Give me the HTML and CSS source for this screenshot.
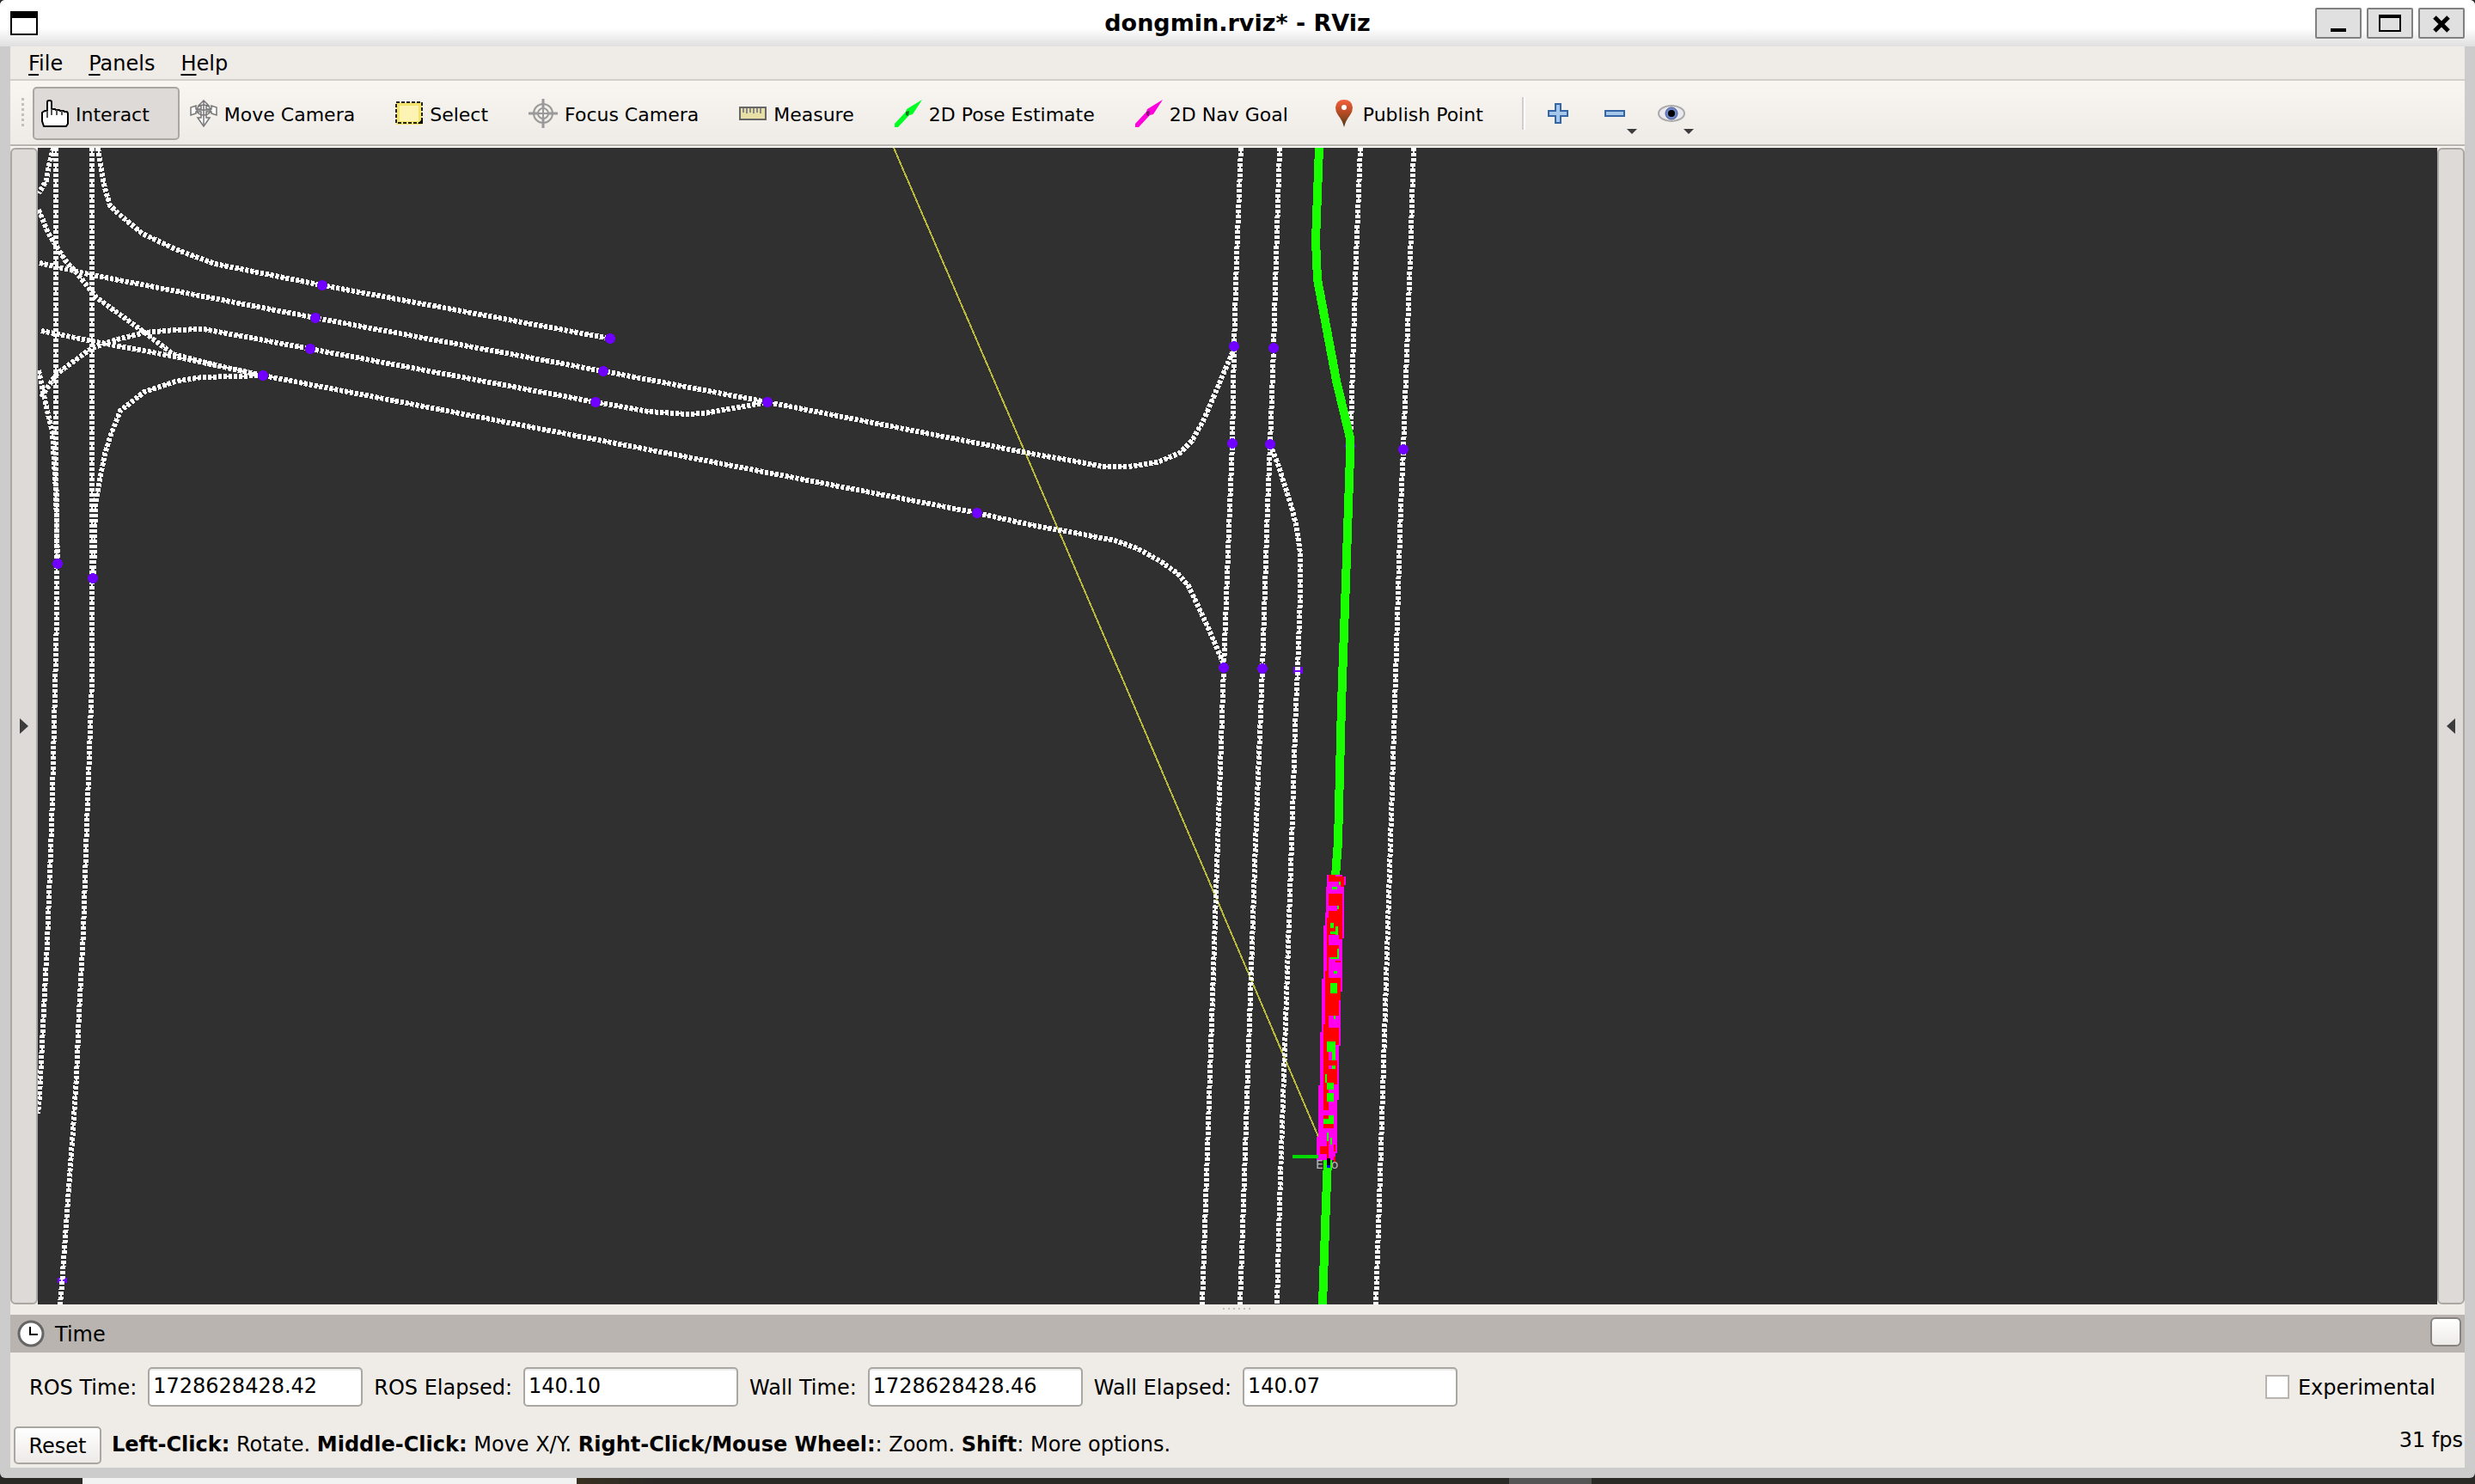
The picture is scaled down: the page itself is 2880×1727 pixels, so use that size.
FILE: index.html
```html
<!DOCTYPE html>
<html lang="en">
<head>
<meta charset="utf-8">
<title>dongmin.rviz* - RViz</title>
<link rel="stylesheet" href="styles.css">
</head>
<body>
<div class="window">
  <header class="titlebar">
    <svg class="app-icon" width="32" height="28" viewBox="0 0 32 28" aria-hidden="true"><path fill="#fff" stroke="#000" stroke-width="2" d="M1 1h30v26H1z"/><path d="M0 0h32v8H0z"/></svg>
    <h1 class="title">dongmin.rviz* - RViz</h1>
    <div class="window-buttons">
      <button class="win-btn" aria-label="Minimize"><svg width="50" height="32" viewBox="0 0 50 32"><path d="M16 22h18v4H16z"/></svg></button>
      <button class="win-btn" aria-label="Maximize"><svg width="50" height="32" viewBox="0 0 50 32"><path fill="none" stroke="#000" stroke-width="2" d="M13 7h24v18H13z"/><path d="M12 6h26v4H12z"/></svg></button>
      <button class="win-btn" aria-label="Close"><svg width="50" height="32" viewBox="0 0 50 32"><path fill="none" stroke="#000" stroke-width="5" d="M17 9l16 16M33 9L17 25"/></svg></button>
    </div>
  </header>

  <div class="frame">
    <nav class="menubar">
      <button class="menu"><span class="key">F</span>ile</button>
      <button class="menu"><span class="key">P</span>anels</button>
      <button class="menu"><span class="key">H</span>elp</button>
    </nav>

    <div class="toolbar" role="toolbar" aria-label="Tools">
      <span class="grip"></span>
      <button class="tool active">
        <svg width="32" height="32" viewBox="0 0 32 32"><path fill="#fff" stroke="#000" stroke-width="2" stroke-linejoin="round" d="M3 31L1 25V15l3-2h3V3q0-2 2-2h1q2 0 2 2v8h4l1 1h4l1 1h4l1 1h3l1 2v12l-2 3z"/><path fill="none" stroke="#555" stroke-width="2" d="M7 13v8M12 11v7M18 12v6M24 13v5"/></svg>
        Interact</button>
      <button class="tool">
        <svg width="32" height="32" viewBox="0 0 32 32" fill="#fff" stroke="#777" stroke-width="1.5"><path d="M16 1l6 6h-3v4l6 0V7l6 2v9l-6-2v-2h-6v7h4l-7 10-7-10h4v-7H7v2l-6 2V9l6-2v4l6 0V7h-3z"/><ellipse cx="16" cy="12" rx="8" ry="6" fill="none"/><path fill="none" d="M8 12h16M16 3v26"/></svg>
        Move Camera</button>
      <button class="tool">
        <svg width="32" height="32" viewBox="0 0 32 32"><path fill="#fdf4b4" stroke="#f3e36a" stroke-width="4" d="M3 5h26v22H3z"/><path fill="none" stroke="#222" stroke-width="2" stroke-dasharray="4 2" d="M1 3h30v24H1z"/><path d="M32 22v6h-6z"/></svg>
        Select</button>
      <button class="tool">
        <svg width="34" height="34" viewBox="0 0 34 34" fill="none" stroke="#999" stroke-width="2"><circle cx="17" cy="17" r="11"/><circle cx="17" cy="17" r="6"/><path stroke-width="3" d="M17 0v12M17 22v12M0 17h12M22 17h12"/><path d="M17 12v10M12 17h10"/></svg>
        Focus Camera</button>
      <button class="tool">
        <svg width="32" height="32" viewBox="0 0 32 32"><path fill="#e8dfa6" stroke="#666" stroke-width="2" d="M1 9h30v14H1z"/><path stroke="#888" stroke-width="2" d="M5 10v5M9 10v6M13 10v5M17 10v6M21 10v5M25 10v6"/></svg>
        Measure</button>
      <button class="tool">
        <svg width="32" height="32" viewBox="0 0 32 32"><path fill="#0f2" d="M0 28L13 14l1-3L32 0 21 17l-4 1L4 32H0z"/><path fill="#0a7a1c" d="M13 14l4-1-1 6-3-1z"/></svg>
        2D Pose Estimate</button>
      <button class="tool">
        <svg width="32" height="32" viewBox="0 0 32 32"><path fill="#f0d" d="M0 28L13 14l1-3L32 0 21 17l-4 1L4 32H0z"/><path fill="#8a1078" d="M13 14l4-1-1 6-3-1z"/></svg>
        2D Nav Goal</button>
      <button class="tool">
        <svg width="32" height="32" viewBox="0 0 32 32"><defs><linearGradient id="pin" x1="0" y1="0" x2="0" y2="1"><stop offset="0" stop-color="#f4603c"/><stop offset=".5" stop-color="#b04a22"/><stop offset="1" stop-color="#4a3c1c"/></linearGradient></defs><path fill="url(#pin)" d="M18 32Q16 24 11 18 8 14 8 9 9 0 18 0t10 9q0 5-3 9-5 6-7 14z"/><circle cx="18" cy="9" r="3" fill="#fff"/></svg>
        Publish Point</button>
      <span class="separator"></span>
      <button class="tool-mini" aria-label="Add tool">
        <svg width="24" height="24" viewBox="0 0 24 24"><path fill="#a6c6ea" stroke="#3465a4" stroke-width="2" d="M9 1h6v8h8v6h-8v8H9v-8H1V9h8z"/></svg></button>
      <button class="tool-mini" aria-label="Remove tool">
        <svg width="24" height="24" viewBox="0 0 24 24"><path fill="#a6c6ea" stroke="#3465a4" stroke-width="2" d="M1 9h22v6H1z"/></svg>
        <span class="drop"></span></button>
      <button class="tool-mini" aria-label="Visibility">
        <svg width="32" height="24" viewBox="0 0 32 24"><ellipse cx="16" cy="12" rx="15" ry="9" fill="#e9e9ee" stroke="#aaa" stroke-width="2"/><circle cx="16" cy="12" r="7" fill="#6f86c8" stroke="#4a5a9c" stroke-width="1"/><circle cx="16" cy="12" r="4"/></svg>
        <span class="drop"></span></button>
    </div>

    <main class="workspace">
      <button class="dock-handle" aria-label="Show left dock"><svg width="10" height="18" viewBox="0 0 10 18"><path fill="#3c3c3c" d="M0 0l10 9-10 9z"/></svg></button>
      <svg class="scene" viewBox="44 172 2792 1346" preserveAspectRatio="xMidYMid slice" role="img" aria-label="3D view" shape-rendering="crispEdges">
        <defs>
          <g id="lanes" fill="none">
            <path d="M65 172V481L66 656 66 717 64 803 60 963 55 1096 51 1175 46 1276 44 1296"/>
            <path d="M107 172V673L107 792 104 876 101 961 97 1084 92 1180 89 1253 85 1315 80 1383 76 1439 72 1495 70 1518"/>
            <path d="M114 172L118 199 122 219 128 239 138 249 166 272 204 290 250 307 375 332 710 394"/>
            <path d="M46 306L107 320 367 370 702 432 893 468 1200 528 1253 537 1283 543H1313L1347 538 1373 527 1387 513 1400 490 1413 460 1435 408"/>
            <path d="M48 462L66 435 107 405 133 396 168 387 204 384 237 383 361 406 693 468 755 479 800 482 820 481 893 468"/>
            <path d="M48 385L107 397 204 415 306 437 800 532 1137 597 1200 611 1250 620 1297 629 1323 638 1350 653 1370 667 1383 682 1393 703 1407 733 1424 773"/>
            <path d="M45 244L56 271 76 303 92 321 112 346 138 365 171 389 201 412 255 426 306 437"/>
            <path d="M62 172L56 196 54 210 45 225"/>
            <path d="M306 437L235 439 204 444 168 456 140 478 130 503 122 528 115 564 111 589 109 673"/>
            <path d="M45 431L54 474 61 503 65 571 67 656"/>
            <path d="M1444 172L1439 300 1436 403 1434 516 1431 590 1424 777 1417 980 1403 1400 1399 1518"/>
            <path d="M1489 172L1485 300 1482 405 1478 517 1475 590 1469 778 1461 980 1447 1400 1443 1518"/>
            <path d="M1478 517L1488 543 1502 587 1508 610 1513 643V693L1510 780 1508 820 1503 980 1489 1400 1486 1518"/>
            <path d="M1583 172L1578 300 1573 460 1572 500"/>
            <path d="M1645 172L1641 300 1633 523 1630 590 1623 820 1618 980 1605 1400 1601 1518"/>
          </g>
        </defs>
        <path fill="none" stroke="#b9b93c" stroke-width="2" d="M1040 172L1200 543 1319 820 1535 1325"/>
        <path fill="#7000ff" d="M67 1487h11v6H67zM1505 776h11v8h-11z"/>
        <use href="#lanes" class="lane-blocks"/>
        <use href="#lanes" class="lane-core"/>
        <g fill="#7000ff">
          <circle cx="375" cy="332" r="6"/><circle cx="367" cy="370" r="6"/><circle cx="361" cy="406" r="6"/>
          <circle cx="306" cy="437" r="6"/><circle cx="710" cy="394" r="6"/><circle cx="702" cy="432" r="6"/>
          <circle cx="693" cy="468" r="6"/><circle cx="67" cy="656" r="6"/><circle cx="108" cy="673" r="6"/>
          <circle cx="893" cy="468" r="6"/><circle cx="1137" cy="597" r="6"/><circle cx="1436" cy="403" r="6"/>
          <circle cx="1482" cy="405" r="6"/><circle cx="1434" cy="516" r="6"/><circle cx="1478" cy="517" r="6"/>
          <circle cx="1633" cy="523" r="6"/><circle cx="1424" cy="777" r="6"/><circle cx="1469" cy="778" r="6"/>
          <circle cx="1571" cy="519" r="6"/>
        </g>
        <path fill="none" stroke="#1aff00" stroke-width="10" d="M1535 172L1531 280 1533 325 1555 443 1571 510V530L1566 677 1561 820 1557 980 1554 1020"/>
        <path fill="#f0e" d="M1544 1018h18v2h4v10h-2v62h-2v62h-2v63h-2v63h-2v62h-2v8h-22v-27h2v-60h2v-62h2v-62h2v-62h2z"/>
        <path fill="#f00" d="M1546 1018h8v2h10v12h-4v-6h-14zM1546 1040h16v53h-4v-5h-14v-20h2zM1544 1088h2v44h-2zM1546 1100h12v14h-12zM1554 1118h6v2h-6zM1542 1130h4v62h-4zM1546 1138h14v26h-2v18h-12zM1540 1192h6v70h-6zM1546 1196h12v20h-12zM1542 1234h14v28h-14zM1540 1250h6v42h-6zM1540 1298h6v4h-6zM1540 1308h12v5h-12zM1536 1334h8v9h-8zM1544 1328h2v20h-2zM1552 1332h2v8h-2zM1552 1346h2v6h-2z"/>
        <path fill="#f0e" d="M1546 1054h10v6h-10zM1550 1224h4v6h-4zM1546 1240h6v4h-6z"/>
        <path fill="#1aff00" d="M1550 1032h6v3h-6zM1558 1026h2v4h-2zM1556 1054h2v4h-2zM1548 1074h4v6h-4zM1554 1078h3v10h-3zM1548 1084h7v3h-7zM1556 1104h2v12h-2zM1548 1114h9v2h-9zM1552 1130h4v3h-4zM1548 1144h8v12h-8zM1552 1182h2v4h-2zM1544 1212h10v12h-10zM1550 1224h4v10h-4zM1550 1240h4v4h-4zM1542 1250h2v10h-2zM1544 1260h8v8h-8zM1544 1272h8v10h-8zM1546 1298h6v4h-6zM1540 1302h12v6h-12zM1544 1318h2v10h-2zM1548 1324h2v8h-2z"/>
        <path fill="#00d800" d="M1504 1344h30v4h-30z"/>
        <text class="ego" x="1531" y="1360">Ego</text>
        <path fill="none" stroke="#1aff00" stroke-width="10" d="M1545 1350L1543 1400 1539 1518"/>
        <path d="M1544 1348h4v8h-4z"/><path fill="#00f" d="M1544 1356h4v3h-4z"/>
      </svg>
      <button class="dock-handle" aria-label="Show right dock"><svg width="10" height="18" viewBox="0 0 10 18"><path fill="#3c3c3c" d="M10 0L0 9l10 9z"/></svg></button>
    </main>

    <div class="splitter"><span class="splitter-dots"></span></div>

    <section class="time-panel">
      <header class="panel-head">
        <svg width="32" height="32" viewBox="0 0 32 32"><circle cx="16" cy="16" r="14" fill="#fff" stroke="#666" stroke-width="3"/><path fill="none" stroke="#000" stroke-width="2" d="M15 8v9h9"/></svg>
        <h2 class="panel-title">Time</h2>
        <button class="panel-close" aria-label="Close panel"></button>
      </header>
      <form class="time-row">
        <label for="ros-time">ROS Time:</label><input class="field" id="ros-time" type="text" value="1728628428.42" readonly>
        <label for="ros-elapsed">ROS Elapsed:</label><input class="field" id="ros-elapsed" type="text" value="140.10" readonly>
        <label for="wall-time">Wall Time:</label><input class="field" id="wall-time" type="text" value="1728628428.46" readonly>
        <label for="wall-elapsed">Wall Elapsed:</label><input class="field" id="wall-elapsed" type="text" value="140.07" readonly>
        <span class="experimental"><input class="check" id="experimental" type="checkbox"><label for="experimental">Experimental</label></span>
      </form>
    </section>

    <footer class="status">
      <button class="reset">Reset</button>
      <p class="hint"><b>Left-Click:</b> Rotate. <b>Middle-Click:</b> Move X/Y. <b>Right-Click/Mouse Wheel:</b>: Zoom. <b>Shift</b>: More options.</p>
      <output class="fps">31 fps</output>
    </footer>
  </div>
</div>
<div class="desktop"></div>
</body>
</html>
```
FILE: styles.css
```css
* { box-sizing: border-box; }

body {
  margin: 0;
  height: 100vh;
  display: flex;
  flex-direction: column;
  background: #2b2926;
  color: #000;
  font: 24px/28px "DejaVu Sans", sans-serif;
  overflow: hidden;
}

button {
  margin: 0;
  padding: 0;
  border: 0;
  background: none;
  color: inherit;
  font: inherit;
}

svg { display: block; flex: none; }

h1, h2, p { margin: 0; }

.window {
  flex: 1;
  min-height: 0;
  display: flex;
  flex-direction: column;
  background: #ccc;
  border-radius: 6px;
}

/* title bar */
.titlebar {
  height: 54px;
  padding: 0 12px;
  display: grid;
  grid-template-columns: 1fr auto 1fr;
  align-items: center;
  background: linear-gradient(#fff 60%, #dfdfdf);
  border-radius: 6px 6px 0 0;
}

.title { font-size: 27px; line-height: 32px; }

.window-buttons {
  display: flex;
  justify-content: flex-end;
  gap: 6px;
}

.win-btn {
  width: 54px;
  height: 36px;
  border: 2px solid #808080;
  border-radius: 2px;
  background: #e0e0e0;
}

/* window body */
.frame {
  flex: 1;
  min-height: 0;
  margin: 0 12px 12px;
  display: flex;
  flex-direction: column;
  background: #efebe7;
}

.menubar {
  height: 40px;
  padding: 2px 0 0 21px;
  display: flex;
  align-items: center;
  gap: 30px;
  border-bottom: 2px solid #d2cecb;
}

.key {
  text-decoration: underline;
  text-decoration-thickness: 2px;
  text-underline-offset: 4px;
  text-decoration-skip-ink: none;
}

.toolbar {
  height: 78px;
  padding-left: 10px;
  display: flex;
  align-items: center;
  gap: 2px;
  background: linear-gradient(#f9f6f2, #eeeae6);
  border-bottom: 2px solid #f6f4f1;
  box-shadow: inset 0 -2px #b8b4b0;
  font-size: 22px;
}

.grip {
  width: 8px;
  height: 36px;
  margin-right: 6px;
  background: repeating-conic-gradient(#c2beba 0 25%, transparent 0 100%) 0 0 / 6px 6px;
}

.tool {
  height: 62px;
  padding: 4px 33px 0 8px;
  display: flex;
  align-items: center;
  gap: 8px;
  border: 2px solid transparent;
  border-radius: 5px;
}

.tool svg { margin-bottom: 4px; }

.tool.active {
  border-color: #aaa6a2;
  background: #dedad7;
}

.separator {
  width: 4px;
  height: 38px;
  margin: 0 4px 0 8px;
  border-left: 2px solid #d2cecb;
  border-right: 2px solid #fff;
}

.tool-mini {
  position: relative;
  height: 60px;
  width: 64px;
  display: flex;
  align-items: center;
  justify-content: center;
}

.drop {
  position: absolute;
  right: 6px;
  bottom: 6px;
  border: 6px solid transparent;
  border-top-color: #3c3c3c;
  border-bottom: 0;
}

.workspace {
  flex: 1;
  min-height: 0;
  display: flex;
}

.dock-handle {
  width: 32px;
  display: flex;
  align-items: center;
  justify-content: center;
  border: 2px solid #aaa6a2;
  border-radius: 6px;
  background: #dedad7;
}

.scene {
  flex: 1;
  min-width: 0;
  height: 100%;
  background: #303030;
}

.lane-blocks { stroke: #fff; stroke-width: 6; stroke-dasharray: 4 2; }
.lane-core { stroke: #fff; stroke-width: 2; stroke-dasharray: 10 8; }
.ego { font-size: 14px; fill: #b8b8b8; }

.splitter {
  height: 12px;
  padding-top: 4px;
  display: flex;
  justify-content: center;
}

.splitter-dots {
  width: 34px;
  height: 2px;
  background: repeating-linear-gradient(90deg, #c2beba 0 2px, transparent 2px 6px);
}

/* time panel */
.panel-head {
  height: 44px;
  padding: 0 4px 0 8px;
  display: flex;
  align-items: center;
  gap: 12px;
  background: #b9b4b0;
}

.panel-title {
  padding-top: 2px;
  font-size: 24px;
  font-weight: 400;
}

.panel-close {
  width: 36px;
  height: 34px;
  margin: 0 0 4px auto;
  border: 2px solid #858280;
  border-radius: 6px;
  background: linear-gradient(#fff, #edebe8);
}

.time-row {
  height: 78px;
  padding: 2px 34px 0 22px;
  display: flex;
  align-items: center;
  gap: 13px;
}

.time-row label { padding-top: 2px; }

.field {
  width: 250px;
  height: 46px;
  padding: 0 4px 2px;
  border: 2px solid #aaa6a2;
  border-radius: 5px;
  background: #fff;
  box-shadow: inset 0 2px #ededed;
  color: inherit;
  font: inherit;
}

.experimental {
  margin-left: auto;
  display: flex;
  align-items: center;
  gap: 10px;
}

.check {
  appearance: none;
  width: 28px;
  height: 28px;
  margin: 0;
  border: 2px solid #b9b4b0;
  background: #fff;
}

/* status bar */
.status {
  height: 56px;
  padding: 2px 2px 0 4px;
  display: flex;
  align-items: center;
  gap: 12px;
}

.reset {
  width: 102px;
  height: 44px;
  margin-top: 2px;
  padding-top: 2px;
  border: 2px solid #aaa6a2;
  border-radius: 5px;
  background: linear-gradient(#fff, #edebe8);
}

.fps { margin: 0 0 10px auto; }

/* strip of the desktop under the window */
.desktop {
  height: 7px;
  background: linear-gradient(90deg, #2b2926 96px, #f2f2f2 96px 671px, #3a3020 671px, #2b2926 760px 1756px, #555 1756px 1852px, #2b2926 1852px);
}
```
